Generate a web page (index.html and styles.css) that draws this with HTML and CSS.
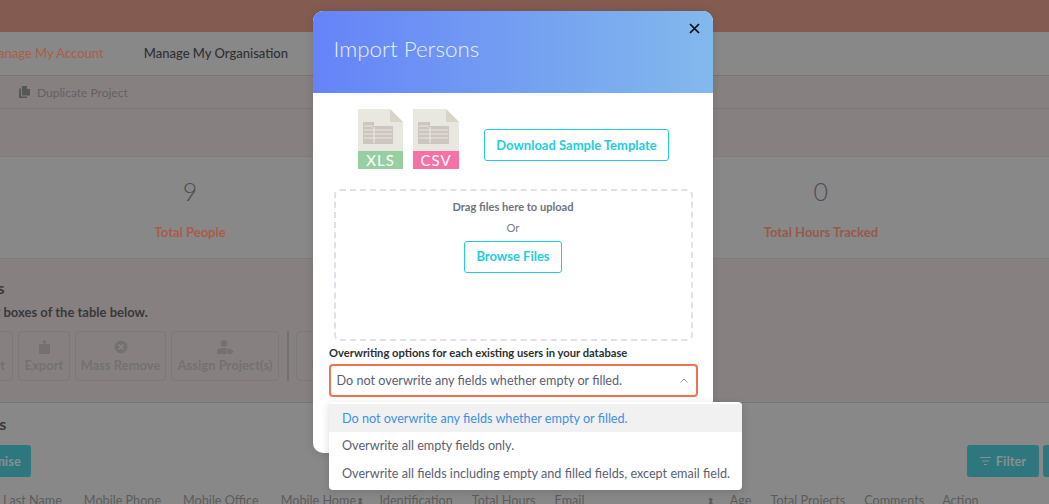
FILE: index.html
```html
<!DOCTYPE html>
<html lang="en">
<head>
  <meta charset="UTF-8">
  <title>Import Persons</title>
  <link rel="stylesheet" href="styles.css">
</head>
<body>

<div class="page">
  <div class="topbar"></div>

  <nav class="nav">
    <a class="nav-link nav-active">Manage My Account</a>
    <a class="nav-link">Manage My Organisation</a>
  </nav>

  <div class="subnav">
    <svg class="dup-icon" width="11" height="12" viewBox="0 0 11 12">
      <path d="M3 0h5v3h3v6.500H3z M0 2.500h2v8h6V12H0z" fill="#575757"/>
    </svg>
    <span>Duplicate Project</span>
  </div>

  <div class="spacer"></div>

  <section class="stats">
    <div class="stat"><div class="stat-num">9</div><div class="stat-label">Total People</div></div>
    <div class="stat"></div>
    <div class="stat"></div>
    <div class="stat"><div class="stat-num">0</div><div class="stat-label stat-label-dark">Total Hours Tracked</div></div>
  </section>

  <section class="actions">
    <h3 class="actions-title">Mass Actions</h3>
    <p class="actions-hint">Select the checkbox in the left boxes of the table below.</p>
    <div class="action-row">
      <div class="action-btn action-import">
        <span class="action-icon"></span>
        <span>Import</span>
      </div>
      <div class="action-btn action-export">
        <svg class="action-icon" width="11" height="14" viewBox="0 0 11 14"><path d="M0 4h4.500V2H3L5.500 0 8 2H6.500v2H11v10H0z" fill="#727272"/></svg>
        <span>Export</span>
      </div>
      <div class="action-btn action-remove">
        <svg class="action-icon" width="14" height="14" viewBox="0 0 14 14"><circle cx="7" cy="7" r="6.500" fill="#727272"/><path d="M4.500 4.500l5 5M9.500 4.500l-5 5" stroke="#858585" stroke-width="1.500"/></svg>
        <span>Mass Remove</span>
      </div>
      <div class="action-btn action-assign">
        <svg class="action-icon" width="17" height="14" viewBox="0 0 17 14"><circle cx="7" cy="3.500" r="3.300" fill="#727272"/><path d="M0 14v-3c0-2 2-3 7-3 2 0 3 .2 4 .6L9.500 10v4z" fill="#727272"/><path d="M11 9h3l3 2.500-3 2.500h-3l-1-2.500z" fill="#727272"/></svg>
        <span>Assign Project(s)</span>
      </div>
      <div class="action-divider"></div>
      <div class="action-btn action-enable">
        <span class="action-icon"></span>
        <span>Enable</span>
      </div>
    </div>
  </section>

  <section class="people">
    <h3 class="people-title">Persons</h3>
    <div class="toolbar">
      <div class="btn-teal btn-customise">Customise</div>
      <div class="toolbar-right">
        <div class="btn-teal btn-filter">
          <svg width="11" height="8" viewBox="0 0 11 8"><path d="M0 .5h11M2 4h7M4 7.500h3" stroke="#878f90" stroke-width="1"/></svg>
          Filter
        </div>
        <div class="btn-teal btn-more"></div>
      </div>
    </div>
    <div class="table-head">
      <span class="col col-last">Last Name</span>
      <span class="col col-phone">Mobile Phone</span>
      <span class="col col-office">Mobile Office</span>
      <span class="col col-home">Mobile Home<span class="sort">⬍</span></span>
      <span class="col col-ident">Identification</span>
      <span class="col col-hours">Total Hours</span>
      <span class="col col-email">Email</span>
      <span class="col col-sort"><span class="sort">⬍</span></span>
      <span class="col col-age">Age</span>
      <span class="col col-projects">Total Projects</span>
      <span class="col col-comments">Comments</span>
      <span class="col">Action</span>
    </div>
  </section>

  <div class="modal">
    <header class="modal-head">
      <h1 class="modal-title">Import Persons</h1>
      <svg class="modal-close" width="11" height="11" viewBox="0 0 11 11">
        <path d="M1 1l9 9M10 1l-9 9" stroke="#0b0b14" stroke-width="1.700"/>
      </svg>
    </header>
    <div class="modal-body">
      <div class="templates">
        <svg class="file-icon" width="46" height="60" viewBox="0 0 46 60">
          <path d="M0 0h32l13 13v29H0z" fill="#e9e8e0"/>
          <path d="M32 0l13 13H32z" fill="#d8d5c8"/>
          <path d="M5 13h11v4h19v18H5z" fill="#cdc5c0"/>
          <path d="M6 17h9M6 21h28M6 25h28M6 29h28M16 18v16" stroke="#e9e8e0" stroke-width="1.200"/>
          <rect y="42" width="45" height="18" fill="#97cfa3"/>
          <text class="file-tag" x="22.500" y="56.500" text-anchor="middle">XLS</text>
        </svg>
        <svg class="file-icon" width="46" height="60" viewBox="0 0 46 60">
          <path d="M0 0h33l13 13v29H0z" fill="#e9e8e0"/>
          <path d="M33 0l13 13H33z" fill="#d8d5c8"/>
          <path d="M5 13h12v4h19v18H5z" fill="#cdc5c0"/>
          <path d="M6 17h10M6 21h29M6 25h29M6 29h29M17 18v16" stroke="#e9e8e0" stroke-width="1.200"/>
          <rect y="42" width="46" height="18" fill="#f871a4"/>
          <text class="file-tag" x="23" y="56.500" text-anchor="middle">CSV</text>
        </svg>
        <button class="outline-btn template-btn">Download Sample Template</button>
      </div>

      <div class="dropzone">
        <div class="drop-title">Drag files here to upload</div>
        <div class="drop-or">Or</div>
        <button class="outline-btn browse-btn">Browse Files</button>
      </div>

      <label class="field-label">Overwriting options for each existing users in your database</label>
      <div class="select">
        <span>Do not overwrite any fields whether empty or filled.</span>
        <svg width="8" height="5" viewBox="0 0 8 5"><path d="M.5 4.500L4 1l3.500 3.500" fill="none" stroke="#8c92a0" stroke-width="1"/></svg>
      </div>
    </div>
  </div>

  <ul class="dropdown">
    <li class="option option-selected">Do not overwrite any fields whether empty or filled.</li>
    <li class="option">Overwrite all empty fields only.</li>
    <li class="option">Overwrite all fields including empty and filled fields, except email field.</li>
  </ul>
</div>

</body>
</html>
```

FILE: styles.css
```css
html, body {
  margin: 0;
  height: 100%;
  overflow: hidden;
}

body {
  font-family: 'Lato', sans-serif;
  background: #888888;
}

.page {
  position: relative;
  width: 1049px;
  height: 504px;
  overflow: hidden;
}

.topbar {
  height: 32px;
  background: #835b51;
}

.nav {
  height: 43px;
  box-sizing: border-box;
  display: flex;
  align-items: center;
  gap: 40px;
  padding-bottom: 2px;
  margin-left: -14px;
  font-size: 13px;
}

.nav-link {
  font-weight: 500;
  color: #2f3033;
}

.nav-active {
  color: #a8604c;
}

.subnav {
  height: 34px;
  box-sizing: border-box;
  display: flex;
  align-items: center;
  gap: 7px;
  padding-left: 19px;
  background: #878080;
  border-top: 1px solid #757575;
  border-bottom: 1px solid #777;
  font-size: 12px;
  color: #626262;
}

.spacer {
  height: 48px;
  box-sizing: border-box;
  background: #878080;
  border-bottom: 1px solid #7c7c7c;
}

.stats {
  height: 102px;
  box-sizing: border-box;
  display: grid;
  grid-template-columns: repeat(4, 1fr);
  padding: 0 123px 0 85px;
  text-align: center;
  border-bottom: 1px solid #7c7c7c;
}

.stat-num {
  margin-top: 19px;
  font-size: 25px;
  font-weight: 300;
  line-height: 30px;
  color: #4a4d52;
}

.stat-label {
  margin-top: 18px;
  font-size: 13px;
  font-weight: 700;
  color: #a85c48;
}

.stat-label-dark {
  color: #98594a;
}

.actions {
  height: 144px;
  box-sizing: border-box;
  padding-top: 19px;
  background: #878080;
  border-bottom: 1px solid #777;
}

.actions-title {
  margin: 0 0 0 -90px;
  font-size: 16px;
  line-height: 20px;
  color: #38393c;
}

.actions-hint {
  margin: 5px 0 0 -174px;
  font-size: 13px;
  font-weight: 700;
  line-height: 18px;
  color: #38393c;
}

.action-row {
  display: flex;
  gap: 5px;
  margin: 10px 0 0 -42px;
}

.action-btn {
  height: 50px;
  box-sizing: border-box;
  display: flex;
  flex: none;
  flex-direction: column;
  align-items: center;
  justify-content: space-between;
  padding: 8px 0 7px;
  border: 1px solid #7a7a7a;
  border-radius: 4px;
  font-size: 13px;
  font-weight: 700;
  white-space: nowrap;
  color: #727272;
}

.action-import { width: 55px; }
.action-export { width: 52px; }
.action-remove { width: 91px; }
.action-assign { width: 108px; }
.action-enable { width: 70px; }

.action-divider {
  width: 2px;
  margin: 0 2px 0 3px;
  background: #727272;
}

.people {
  padding-top: 11px;
}

.people-title {
  margin: 0 0 0 -50px;
  font-size: 16px;
  line-height: 20px;
  color: #38393c;
}

.toolbar {
  display: flex;
  justify-content: space-between;
  margin: 11px 0 0 -50px;
}

.toolbar-right {
  display: flex;
  gap: 4px;
  margin-right: -30px;
}

.btn-teal {
  height: 32px;
  box-sizing: border-box;
  display: flex;
  align-items: center;
  justify-content: center;
  gap: 5px;
  border-radius: 3px;
  background: #2f777e;
  font-size: 13px;
  font-weight: 700;
  color: #878f90;
}

.btn-customise { width: 81px; }
.btn-filter { width: 72px; }
.btn-more { width: 36px; }

.table-head {
  display: flex;
  margin: 16px 0 0 3px;
  font-size: 12.650px;
  line-height: 16px;
  color: #5c5c5c;
  white-space: nowrap;
}

.col-last { margin-right: 22px; }
.col-phone { margin-right: 22px; }
.col-office { margin-right: 22px; }
.col-home { margin-right: 15px; }
.col-ident { margin-right: 19px; }
.col-hours { margin-right: 19px; }
.col-email { margin-right: 122px; }
.col-sort { margin-right: 15px; }
.col-age { margin-right: 19px; }
.col-projects { margin-right: 19px; }
.col-comments { margin-right: 18px; }

.sort {
  font-size: 10px;
  font-family: 'DejaVu Sans', sans-serif;
}

.modal {
  position: absolute;
  top: 11px;
  left: 313px;
  width: 400px;
  height: 442px;
  background: #fff;
  border-radius: 10px;
  overflow: hidden;
  box-shadow: 0 0 10px rgba(0, 0, 0, 0.12);
}

.modal-head {
  position: relative;
  height: 82px;
  background: linear-gradient(90deg, #6583f8, #82b9ec);
}

.modal-title {
  margin: 0;
  padding: 23px 0 0 20.500px;
  font-size: 22.400px;
  font-weight: 300;
  line-height: 30px;
  color: #e9effd;
}

.modal-close {
  position: absolute;
  top: 12px;
  right: 13px;
}

.modal-body {
  padding: 16px 16px 0;
}

.templates {
  display: flex;
  align-items: flex-start;
  gap: 9px;
  padding-left: 29px;
}

.file-icon {
  flex: none;
}

.file-tag {
  font-family: 'Lato', sans-serif;
  font-size: 15px;
  font-weight: 400;
  letter-spacing: 1px;
  fill: #fff;
}

.outline-btn {
  height: 32px;
  padding: 0;
  background: #fff;
  border: 1px solid #1fcbde;
  border-radius: 3px;
  font-family: inherit;
  font-size: 13px;
  font-weight: 700;
  color: #22cde0;
}

.template-btn {
  width: 185px;
  margin: 20px 0 0 16px;
}

.browse-btn {
  width: 98px;
  padding-bottom: 2px;
}

.dropzone {
  width: 359px;
  height: 152px;
  box-sizing: border-box;
  margin: 20px 0 0 4.500px;
  padding-top: 9px;
  border: 2px dashed #dfe0e8;
  border-radius: 6px;
  text-align: center;
}

.drop-title {
  font-size: 11.100px;
  font-weight: 700;
  line-height: 14px;
  color: #6e7380;
}

.drop-or {
  margin: 7px 0 6px;
  font-size: 11.100px;
  line-height: 14px;
  color: #777c88;
}

.field-label {
  display: block;
  margin-top: 5px;
  font-size: 11.200px;
  font-weight: 700;
  line-height: 14px;
  color: #2e2f33;
}

.select {
  width: 369px;
  height: 33px;
  box-sizing: border-box;
  display: flex;
  align-items: center;
  justify-content: space-between;
  margin-top: 4px;
  padding: 0 8px 0 5.500px;
  border: 2px solid #ef7350;
  border-radius: 4px;
  font-size: 12.650px;
  color: #5a6072;
}

.dropdown {
  position: absolute;
  top: 402px;
  left: 329px;
  width: 413px;
  height: 88px;
  box-sizing: border-box;
  margin: 0;
  padding: 2px 0 0;
  list-style: none;
  background: #fff;
  border-radius: 4px;
  box-shadow: 0 2px 8px rgba(0, 0, 0, 0.15);
  font-size: 12.650px;
  color: #5a6072;
}

.option {
  height: 27.500px;
  padding-left: 13px;
  line-height: 27.500px;
}

.option-selected {
  height: 28px;
  line-height: 30px;
  background: #f1f1f1;
  color: #3b92ea;
}
```
